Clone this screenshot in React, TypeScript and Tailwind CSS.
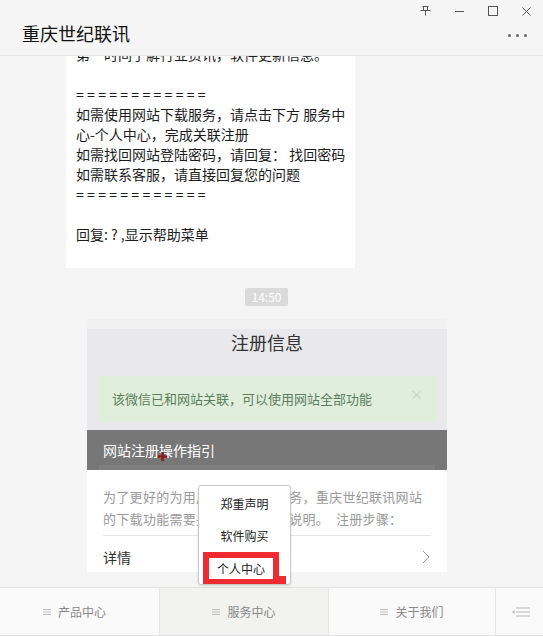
import React from 'react';

const font = "font-['Noto_Sans_CJK_SC','Noto_Sans',sans-serif]";

function MenuLines({ className = '' }: { className?: string }) {
    return (
        <svg width="8" height="8" viewBox="0 0 8 8" className={className}>
            <path d="M0 1.5h8M0 4h8M0 6.5h8" stroke="#bdbdbd" strokeWidth="1" />
        </svg>
    );
}

function WindowControls() {
    return (
        <div className="flex items-center h-[20px] pr-[12px] gap-[24px]">
            {/* pin */}
            <svg width="11" height="10" viewBox="0 0 11 10">
                <path d="M2.5 0.5h6M3.5 0.5v4M7.5 0.5v4M0.5 4.5h10M5.5 4.5v5" stroke="#555" strokeWidth="1" fill="none" />
            </svg>
            {/* minimize */}
            <svg width="9" height="10" viewBox="0 0 9 10">
                <path d="M0 5.5h9" stroke="#555" strokeWidth="1" />
            </svg>
            {/* maximize */}
            <svg width="10" height="10" viewBox="0 0 10 10">
                <rect x="0.5" y="0.5" width="9" height="9" stroke="#555" strokeWidth="1" fill="none" />
            </svg>
            {/* close */}
            <svg width="9" height="9" viewBox="0 0 9 9">
                <path d="M0.5 0.5l8 8M8.5 0.5l-8 8" stroke="#555" strokeWidth="1" />
            </svg>
        </div>
    );
}

export default function App() {
    return (
        <div className={`${font} relative w-[543px] h-[636px] bg-[#f5f5f5] flex flex-col overflow-hidden`}>

            {/* Header */}
            <div className="h-[56px] shrink-0 border-b border-[#e5e5e5] flex flex-col">
                <div className="flex justify-end pt-[1px]">
                    <WindowControls />
                </div>
                <div className="flex items-center justify-between pl-[22px] pr-[16px] -mt-[1px]">
                    <span className="text-[18px] leading-[26px] text-[#111]">重庆世纪联讯</span>
                    <div className="flex gap-[5px] mt-[4px]">
                        <span className="w-[3px] h-[3px] rounded-full bg-[#666]" />
                        <span className="w-[3px] h-[3px] rounded-full bg-[#666]" />
                        <span className="w-[3px] h-[3px] rounded-full bg-[#666]" />
                    </div>
                </div>
            </div>

            {/* Chat area */}
            <div className="flex-1 overflow-hidden flex flex-col">
                {/* text bubble, top clipped */}
                <div className="ml-[66px] w-[289px] -mt-[22px] bg-white px-[10px] pt-[10px] pb-[24px] text-[14px] leading-[20px] text-[#1c1c1c] whitespace-nowrap">
                    <div>第一时间了解行业资讯，软件更新信息。</div>
                    <div>&nbsp;</div>
                    <div className="tracking-[3.3px]">============</div>
                    <div>如需使用网站下载服务，请点击下方 服务中</div>
                    <div>心-个人中心，完成关联注册</div>
                    <div>如需找回网站登陆密码，请回复： 找回密码</div>
                    <div>如需联系客服，请直接回复您的问题</div>
                    <div className="tracking-[3.3px]">============</div>
                    <div>&nbsp;</div>
                    <div>回复: ? ,显示帮助菜单</div>
                </div>

                {/* time */}
                <div className="mt-[20px] ml-[245px] w-[43px] h-[18px] rounded-[2px] bg-[#dadada] text-white text-[12px] leading-[18px] text-center">
                    14:50
                </div>

                {/* article card */}
                <div className="mt-[13px] ml-[87px] w-[360px] flex flex-col">
                    <div className="h-[10px] bg-[#f1f1f2]" />
                    <div className="bg-[#e9e9ec] flex flex-col pb-[8px]">
                        <div className="h-[26px] text-center text-[18px] leading-[26px] text-[#333]">注册信息</div>
                        <div className="mt-[21px] ml-[11px] w-[338px] h-[46px] bg-[#e0efdc] flex items-center justify-between pl-[14px] pr-[13px]">
                            <span className="text-[13px] text-[#5e7d5e]">该微信已和网站关联，可以使用网站全部功能</span>
                            <span className="text-[13px] text-[#c4d3c4] -mt-[10px]">×</span>
                        </div>
                    </div>

                    {/* dark overlay title */}
                    <div className="relative h-[40px] bg-[#777777] flex flex-col">
                        <div className="h-[35px] flex items-center pl-[16px] pt-[6px]">
                            <span className="text-white text-[14px]">网站注册操作指引</span>
                        </div>
                        <div className="mx-[12px] h-[5px] bg-[#7f7f7f]" />
                        <svg width="9" height="9" viewBox="0 0 9 9" className="absolute left-[71px] top-[22px]">
                            <path d="M4.5 0v9M0 4.5h9" stroke="#8a1a1a" strokeWidth="2.5" />
                        </svg>
                    </div>

                    {/* white body */}
                    <div className="bg-white px-[16px] pt-[16px] h-[102px]">
                        <div className="text-[13px] leading-[22px] text-[#9a9a9a] tracking-[0.3px] whitespace-nowrap">
                            <div>为了更好的为用户提供更优质服务，重庆世纪联讯网站</div>
                            <div>的下载功能需要关联微信，具体说明。　注册步骤：</div>
                        </div>
                        <div className="mt-[5px] border-t border-[#e6e6e6]" />
                        <div className="h-[36px] pt-[6px] flex items-center justify-between">
                            <span className="text-[14px] text-[#333]">详情</span>
                            <svg width="8" height="14" viewBox="0 0 8 14" className="mr-[1px]">
                                <path d="M1 1l6 6-6 6" stroke="#9a9a9a" strokeWidth="1" fill="none" />
                            </svg>
                        </div>
                    </div>
                </div>
            </div>

            {/* Footer menu */}
            <div className="h-[49px] shrink-0 bg-[#fafafa] border-t border-b border-[#e2e2e2] flex text-[12px] text-[#888]">
                <div className="w-[160px] border-r border-[#e6e6e6] flex items-center justify-center gap-[7px] pr-[10px]">
                    <MenuLines />
                    <span>产品中心</span>
                </div>
                <div className="w-[169px] bg-[#f2f2f0] border-r border-[#e6e6e6] flex items-center justify-center gap-[7px]">
                    <MenuLines />
                    <span>服务中心</span>
                </div>
                <div className="w-[167px] border-r border-[#e6e6e6] flex items-center justify-center gap-[7px]">
                    <MenuLines />
                    <span>关于我们</span>
                </div>
                <div className="flex-1 flex items-center justify-center pl-[2px]">
                    <svg width="18" height="10" viewBox="0 0 18 10">
                        <path d="M0 5l2.5-2v4z" fill="#b5b5b5" />
                        <path d="M4 1h14M4 5h14M4 9h14" stroke="#b5b5b5" strokeWidth="1" />
                    </svg>
                </div>
            </div>

            {/* Popup menu over the page */}
            <div className="absolute left-[198px] top-[485px] w-[93px] h-[100px] bg-white border border-[#c9c9c9] rounded-[3px] shadow-[0_1px_3px_rgba(0,0,0,0.12)] flex flex-col text-[12px] text-[#222]">
                <div className="h-[34px] pt-[2px] flex items-center justify-center">郑重声明</div>
                <div className="h-[32px] flex items-center justify-center">软件购买</div>
                <div className="relative ml-[4px] w-[76px] h-[32px] bg-[#ee2b30] pt-[6px] pl-[6px] pr-[6px] pb-[5px]">
                    <div className="h-full bg-white flex items-center justify-center">个人中心</div>
                    <div className="absolute left-[76px] bottom-0 w-[7px] h-[8px] bg-[#ee2b30]" />
                </div>
            </div>
        </div>
    );
}
